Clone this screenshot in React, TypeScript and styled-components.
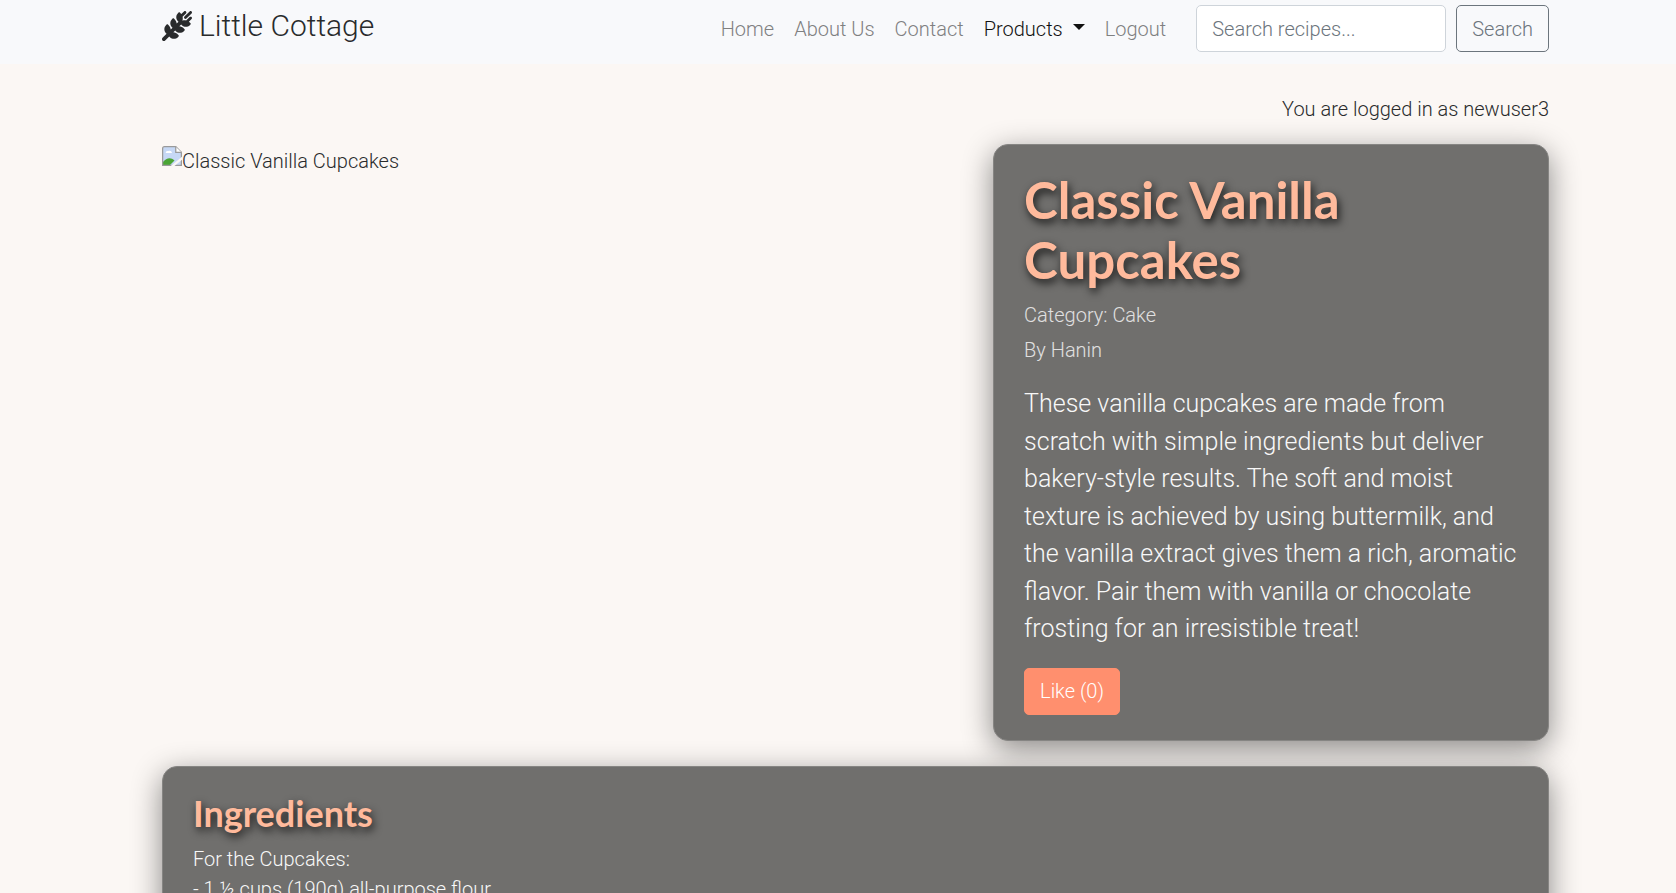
import React from "react";
import styled, { createGlobalStyle } from "styled-components";
import { FaWheatAwn } from "react-icons/fa6";

const GlobalStyle = createGlobalStyle`
  *, *::before, *::after { box-sizing: border-box; }
  html { height: 100%; }
  body {
    margin: 0;
    height: 100%;
    overflow: hidden;
    background: #fbf7f4;
    color: #292b2c;
    font-family: Roboto, "Liberation Sans", sans-serif;
    font-size: 20px;
    font-weight: 300;
    line-height: 30px;
  }
`;

const Navbar = styled.header`
  display: flex;
  justify-content: space-between;
  align-items: flex-start;
  padding: 5px 127px 12px 162px;
  background: #f8f9fb;
`;

const Brand = styled.a`
  display: flex;
  align-items: center;
  gap: 7px;
  height: 42px;
  color: #292b2c;
  font-size: 30px;
  text-decoration: none;
`;

const Menu = styled.nav`
  display: flex;
  align-items: center;
`;

const MenuLink = styled.a<{ $active?: boolean }>`
  display: flex;
  align-items: center;
  padding: 0 10px;
  color: ${(p) => (p.$active ? "#111" : "#7f8081")};
  text-decoration: none;
`;

const Caret = styled.span`
  margin: 0 0 4px 10px;
  border: 6px solid transparent;
  border-top-color: currentColor;
  border-bottom: 0;
`;

const SearchForm = styled.form`
  display: flex;
  gap: 10px;
  margin-left: 20px;
`;

const SearchInput = styled.input`
  width: 250px;
  height: 47px;
  padding: 0 15px;
  border: 1px solid #ced4da;
  border-radius: 5px;
  background: #fff;
  color: #495057;
  font: inherit;
  &::placeholder {
    color: #6c757d;
    opacity: 1;
  }
`;

const Button = styled.button<{ $primary?: boolean }>`
  height: 47px;
  padding: 0 15px;
  border: 1px solid ${(p) => (p.$primary ? "#ff8f6e" : "#6c757d")};
  border-radius: 5px;
  background: ${(p) => (p.$primary ? "#ff8f6e" : "transparent")};
  color: ${(p) => (p.$primary ? "#fff" : "#6c757d")};
  font: inherit;
`;

const Main = styled.main`
  display: flex;
  flex-direction: column;
  padding: 30px 127px 30px 162px;
`;

const LoginNote = styled.p`
  margin: 0 0 20px;
  text-align: right;
`;

const Overview = styled.div`
  display: grid;
  grid-template-columns: minmax(0, 7fr) minmax(0, 5fr);
  margin-bottom: 25px;
`;

const Figure = styled.div`
  display: flex;
  align-items: flex-start;
  padding-top: 2px;
`;

const Card = styled.section<{ $wide?: boolean }>`
  margin-left: ${(p) => (p.$wide ? "0" : "22px")};
  padding: 25px 30px;
  border: 1px solid #868583;
  border-radius: 15px;
  background: #706f6d;
  color: #f8f8f8;
  box-shadow: 0 8px 30px rgba(0, 0, 0, 0.45);
`;

const Heading = styled.h1`
  margin: 0 0 10px;
  color: #ffba9c;
  font-family: Lato, sans-serif;
  font-size: 51px;
  font-weight: 700;
  line-height: 60px;
  text-shadow: 2px 4px 8px rgba(0, 0, 0, 0.8);
`;

const Subheading = styled(Heading).attrs({ as: "h2" })`
  font-size: 36px;
  line-height: 42px;
`;

const Meta = styled.p`
  margin: 0 0 5px;
  color: #e0e0e0;
`;

const Description = styled.p`
  margin: 20px 0;
  font-size: 25px;
  line-height: 1.5;
`;

const BrokenImage = () => (
  <svg width="20" height="20" viewBox="0 0 16 16" aria-hidden="true">
    <path d="M2 .5h9l4.500 4.500v10.500H.5V2z" fill="#c6d8f5" />
    <path d="M.5 15.500v-2.500C4 9 7 9 10 11.500l-4 4z" fill="#4aa534" />
    <path d="M3 5.500a1.500 1.500 0 0 1 2-1.500 2 2 0 0 1 3 1.500z" fill="#fff" />
    <path d="M.5 15.500V2Q.5.5 2 .5h9l4.500 4.500v10.500z" fill="none" stroke="#9a9a9a" />
    <path d="M11 .5v4.500h4.500" fill="#fff" stroke="#9a9a9a" />
    <path d="M7 16 16 8.500v2.500L10 16z" fill="#fbf7f4" />
  </svg>
);

export default function App() {
  return (
    <>
      <GlobalStyle />
      <Navbar>
        <Brand href="#">
          <FaWheatAwn aria-hidden="true" />
          Little Cottage
        </Brand>
        <Menu>
          <MenuLink href="#">Home</MenuLink>
          <MenuLink href="#">About Us</MenuLink>
          <MenuLink href="#">Contact</MenuLink>
          <MenuLink href="#" $active>
            Products
            <Caret />
          </MenuLink>
          <MenuLink href="#">Logout</MenuLink>
          <SearchForm>
            <SearchInput type="search" placeholder="Search recipes..." aria-label="Search recipes" />
            <Button type="button">Search</Button>
          </SearchForm>
        </Menu>
      </Navbar>
      <Main>
        <LoginNote>You are logged in as newuser3</LoginNote>
        <Overview>
          <Figure>
            <BrokenImage />
            <span>Classic Vanilla Cupcakes</span>
          </Figure>
          <Card>
            <Heading>Classic Vanilla Cupcakes</Heading>
            <Meta>Category: Cake</Meta>
            <Meta>By Hanin</Meta>
            <Description>
              These vanilla cupcakes are made from scratch with simple ingredients but deliver bakery-style results. The
              soft and moist texture is achieved by using buttermilk, and the vanilla extract gives them a rich,
              aromatic flavor. Pair them with vanilla or chocolate frosting for an irresistible treat!
            </Description>
            <Button type="button" $primary>
              Like (0)
            </Button>
          </Card>
        </Overview>
        <Card $wide>
          <Subheading>Ingredients</Subheading>
          <div>For the Cupcakes:</div>
          <div>- 1 ½ cups (190g) all-purpose flour</div>
        </Card>
      </Main>
    </>
  );
}
